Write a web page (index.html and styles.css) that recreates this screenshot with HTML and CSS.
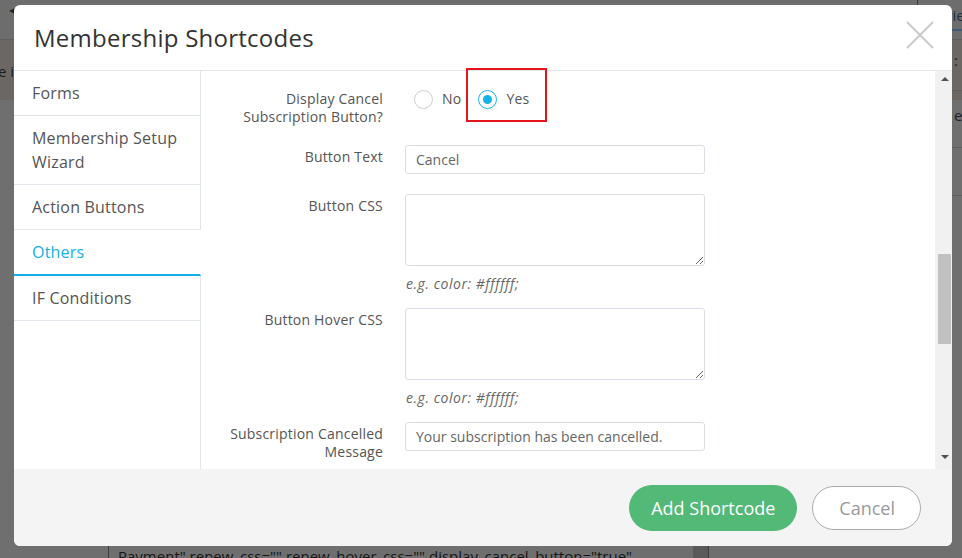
FILE: index.html
```html
<!DOCTYPE html>
<html lang="en">
<head>
<meta charset="utf-8">
<title>Membership Shortcodes</title>
<link rel="stylesheet" href="styles.css">
</head>
<body>
<div class="backdrop">
  <div class="bg-top"><span class="bg-arrow">&#9666;</span></div>
  <div class="bg-band"><span class="bg-band-text">e is</span></div>
  <div class="bg-right">
    <div class="bg-tab">vie</div>
    <div class="bg-row bg-row-a">:</div>
    <div class="bg-row bg-row-b">er</div>
    <div class="bg-row bg-row-c"></div>
  </div>
  <div class="bg-code"><span class="bg-code-text">Payment" renew_css="" renew_hover_css="" display_cancel_button="true"</span><span class="bg-code-bar"></span></div>
</div>

<div class="modal">
  <div class="modal-header">
    <h2 class="modal-title">Membership Shortcodes</h2>
    <button class="close" type="button" aria-label="Close">
      <svg width="28" height="28" viewBox="0 0 28 28"><path d="M1 1 L27 27 M27 1 L1 27" stroke="#c9c9c9" stroke-width="1.8" fill="none"/></svg>
    </button>
  </div>
  <div class="modal-body">
    <nav class="side">
      <div class="side-item">Forms</div>
      <div class="side-item">Membership Setup Wizard</div>
      <div class="side-item">Action Buttons</div>
      <div class="side-item active">Others</div>
      <div class="side-item">IF Conditions</div>
      <div class="side-fill"></div>
    </nav>
    <div class="panel">
      <div class="panel-content">
        <div class="row row-radio">
          <label class="lbl lbl-top">Display Cancel<br>Subscription Button?</label>
          <div class="radios">
            <span class="radio"><span class="circle"></span>No</span>
            <span class="radio checked"><span class="circle"><span class="dot"></span></span>Yes</span>
          </div>
        </div>
        <div class="row">
          <label class="lbl">Button Text</label>
          <input class="field" type="text" value="Cancel">
        </div>
        <div class="row row-hint">
          <label class="lbl">Button CSS</label>
          <div class="ctl">
            <textarea class="area"></textarea>
            <div class="hint">e.g. color: #ffffff;</div>
          </div>
        </div>
        <div class="row row-hint">
          <label class="lbl">Button Hover CSS</label>
          <div class="ctl">
            <textarea class="area"></textarea>
            <div class="hint">e.g. color: #ffffff;</div>
          </div>
        </div>
        <div class="row">
          <label class="lbl">Subscription Cancelled<br>Message</label>
          <input class="field" type="text" value="Your subscription has been cancelled.">
        </div>
      </div>
      <div class="scrollbar">
        <span class="arrow up"></span>
        <span class="track"><span class="thumb"></span></span>
        <span class="arrow down"></span>
      </div>
    </div>
  </div>
  <div class="modal-footer">
    <button class="btn btn-primary" type="button">Add Shortcode</button>
    <button class="btn btn-cancel" type="button">Cancel</button>
  </div>
  <div class="highlight"></div>
</div>
</body>
</html>
```

FILE: styles.css
```css
* { box-sizing: border-box; }

html, body {
  margin: 0;
  padding: 0;
}

body {
  width: 962px;
  height: 558px;
  overflow: hidden;
  position: relative;
  background: #6f6f6f;
  font-family: "Open Sans", "DejaVu Sans", sans-serif;
}

/* ---------- page behind the overlay ---------- */
.backdrop {
  width: 962px;
  height: 558px;
  display: flex;
  flex-direction: column;
}

.bg-top {
  height: 40px;
  border-bottom: 1px solid #5f5f5f;
  padding: 0 0 0 9px;
  background: #6d6d6d;
}

.bg-arrow {
  display: block;
  color: #222;
  font-size: 12px;
  line-height: 20px;
}

.bg-band {
  height: 60px;
  background: #6c6762;
  padding-top: 20px;
}

.bg-band-text {
  font-size: 15px;
  line-height: 22px;
  color: #1d1d1d;
  margin-left: -2px;
}

.bg-right {
  position: absolute;
  top: 0;
  left: 917px;
  width: 45px;
  height: 200px;
}

.bg-tab {
  height: 31px;
  border-left: 1px solid #3b3b3b;
  border-bottom: 2px solid #3c5c78;
  padding-left: 27px;
  font-size: 15px;
  line-height: 30px;
  color: #1e2f40;
}

.bg-row {
  margin-left: 35px;
  border-bottom: 1px solid #5e5e5e;
  color: #222;
  font-size: 15px;
  padding-left: 2px;
}

.bg-row-a { height: 60px; line-height: 58px; }
.bg-row-b { height: 57px; line-height: 48px; }
.bg-row-c { height: 48px; }

.bg-code {
  position: absolute;
  left: 108px;
  top: 540px;
  width: 601px;
  height: 30px;
  border-left: 1px solid #3a3a3a;
  border-right: 1px solid #3a3a3a;
  display: flex;
  justify-content: space-between;
}

.bg-code-text {
  padding-left: 9px;
  padding-top: 5px;
  font-size: 15px;
  line-height: 22px;
  color: #161616;
  white-space: nowrap;
}

.bg-code-bar {
  width: 15px;
  background: #5a5a5a;
}

/* ---------- modal ---------- */
.modal {
  position: absolute;
  left: 14px;
  top: 5px;
  width: 938px;
  height: 541px;
  background: #fff;
  border-radius: 6px;
  overflow: hidden;
  display: flex;
  flex-direction: column;
}

.modal-header {
  height: 66px;
  flex: none;
  display: flex;
  align-items: center;
  justify-content: space-between;
  padding: 0 18px 0 20px;
  border-bottom: 1px solid #e5e5e5;
}

.modal-title {
  margin: 0;
  font-size: 24px;
  font-weight: 400;
  color: #333;
  line-height: 33px;
  letter-spacing: 0.25px;
}

.close {
  border: 0;
  background: transparent;
  padding: 0;
  width: 28px;
  height: 28px;
  margin-top: -5px;
  display: flex;
}

.modal-body {
  height: 398px;
  flex: none;
  display: flex;
}

/* side nav */
.side {
  width: 187px;
  flex: none;
  display: flex;
  flex-direction: column;
}

.side-item {
  padding: 10px 12px 10px 18px;
  font-size: 16px;
  line-height: 24px;
  letter-spacing: 0.2px;
  color: #555;
  border-bottom: 1px solid #e1e6ec;
  border-right: 1px solid #e1e6ec;
}

.side-item.active {
  color: #10b1e8;
  border-right-color: transparent;
  border-bottom: 2px solid #10b1e8;
  padding-bottom: 10px;
}

.side-fill {
  flex: 1;
  border-right: 1px solid #e1e6ec;
}

/* right panel */
.panel {
  flex: 1;
  display: flex;
  min-width: 0;
}

.panel-content {
  flex: 1;
  overflow: hidden;
  padding-top: 19px;
}

.row {
  display: grid;
  grid-template-columns: 182px 300px;
  column-gap: 22px;
  margin-bottom: 20px;
  align-items: start;
}

.row-radio { margin-bottom: 19px; }
.row-hint { margin-bottom: 13px; }

.lbl {
  text-align: right;
  font-size: 14px;
  line-height: 18px;
  letter-spacing: 0.2px;
  color: #555;
  padding-top: 3px;
}

.lbl-top { padding-top: 0; }

.radios {
  display: flex;
  align-items: center;
  height: 18px;
  padding-left: 9px;
  gap: 17px;
  font-size: 14px;
  letter-spacing: 0.2px;
  color: #555;
}

.radio {
  display: flex;
  align-items: center;
  gap: 9px;
  line-height: 18px;
}

.circle {
  width: 19px;
  height: 19px;
  border-radius: 50%;
  border: 1px solid #cfcfcf;
  background: #fff;
  display: flex;
  align-items: center;
  justify-content: center;
}

.radio.checked .circle { border-color: #18b4e6; }

.dot {
  width: 9px;
  height: 9px;
  border-radius: 50%;
  background: #12b3e6;
}

.field {
  display: block;
  width: 300px;
  height: 29px;
  border: 1px solid #d9dee6;
  border-radius: 3px;
  padding: 0 10px;
  font-family: "Open Sans", "DejaVu Sans", sans-serif;
  font-size: 14px;
  color: #666;
  background: #fff;
  outline: none;
}

.ctl { width: 300px; }

.area {
  display: block;
  width: 300px;
  height: 72px;
  border: 1px solid #d9dee6;
  border-radius: 3px;
  background: #fff;
  margin: 0;
  outline: none;
  font-family: "Open Sans", "DejaVu Sans", sans-serif;
}

.hint {
  margin-top: 7px;
  padding-left: 1px;
  font-size: 14px;
  line-height: 22px;
  letter-spacing: 0.55px;
  font-style: italic;
  color: #666;
}

/* fake scrollbar */
.scrollbar {
  width: 17px;
  flex: none;
  background: #f1f1f1;
  display: flex;
  flex-direction: column;
  align-items: center;
  padding: 0 0 0 2px;
}

.arrow {
  flex: none;
  width: 0;
  height: 0;
  border-left: 4px solid transparent;
  border-right: 4px solid transparent;
}

.arrow.up {
  margin-top: 6px;
  border-bottom: 4px solid #505050;
  margin-bottom: 5px;
}

.arrow.down {
  margin-top: 5px;
  margin-bottom: 10px;
  border-top: 4px solid #505050;
}

.track {
  flex: 1;
  width: 100%;
  padding-top: 168px;
  padding-left: 1px;
  padding-right: 1px;
}

.thumb {
  display: block;
  height: 90px;
  background: #c1c1c1;
}

/* footer */
.modal-footer {
  flex: 1;
  background: #f4f4f4;
  display: flex;
  justify-content: flex-end;
  align-items: flex-start;
  padding: 16px 31px 0 0;
  gap: 15px;
}

.btn {
  font-family: "Open Sans", "DejaVu Sans", sans-serif;
  font-size: 18px;
  line-height: 24px;
  border-radius: 23px;
  cursor: pointer;
}

.btn-primary {
  height: 46px;
  padding: 0 22px;
  background: #53b976;
  color: #fff;
  border: 0;
}

.btn-cancel {
  height: 44px;
  margin-top: 1px;
  padding: 0 25px 0 26px;
  background: #fff;
  color: #9a9a9a;
  border: 1px solid #acacac;
}

/* red annotation box */
.highlight {
  position: absolute;
  left: 452px;
  top: 63px;
  width: 81px;
  height: 54px;
  border: 2px solid #e3161b;
}
```
